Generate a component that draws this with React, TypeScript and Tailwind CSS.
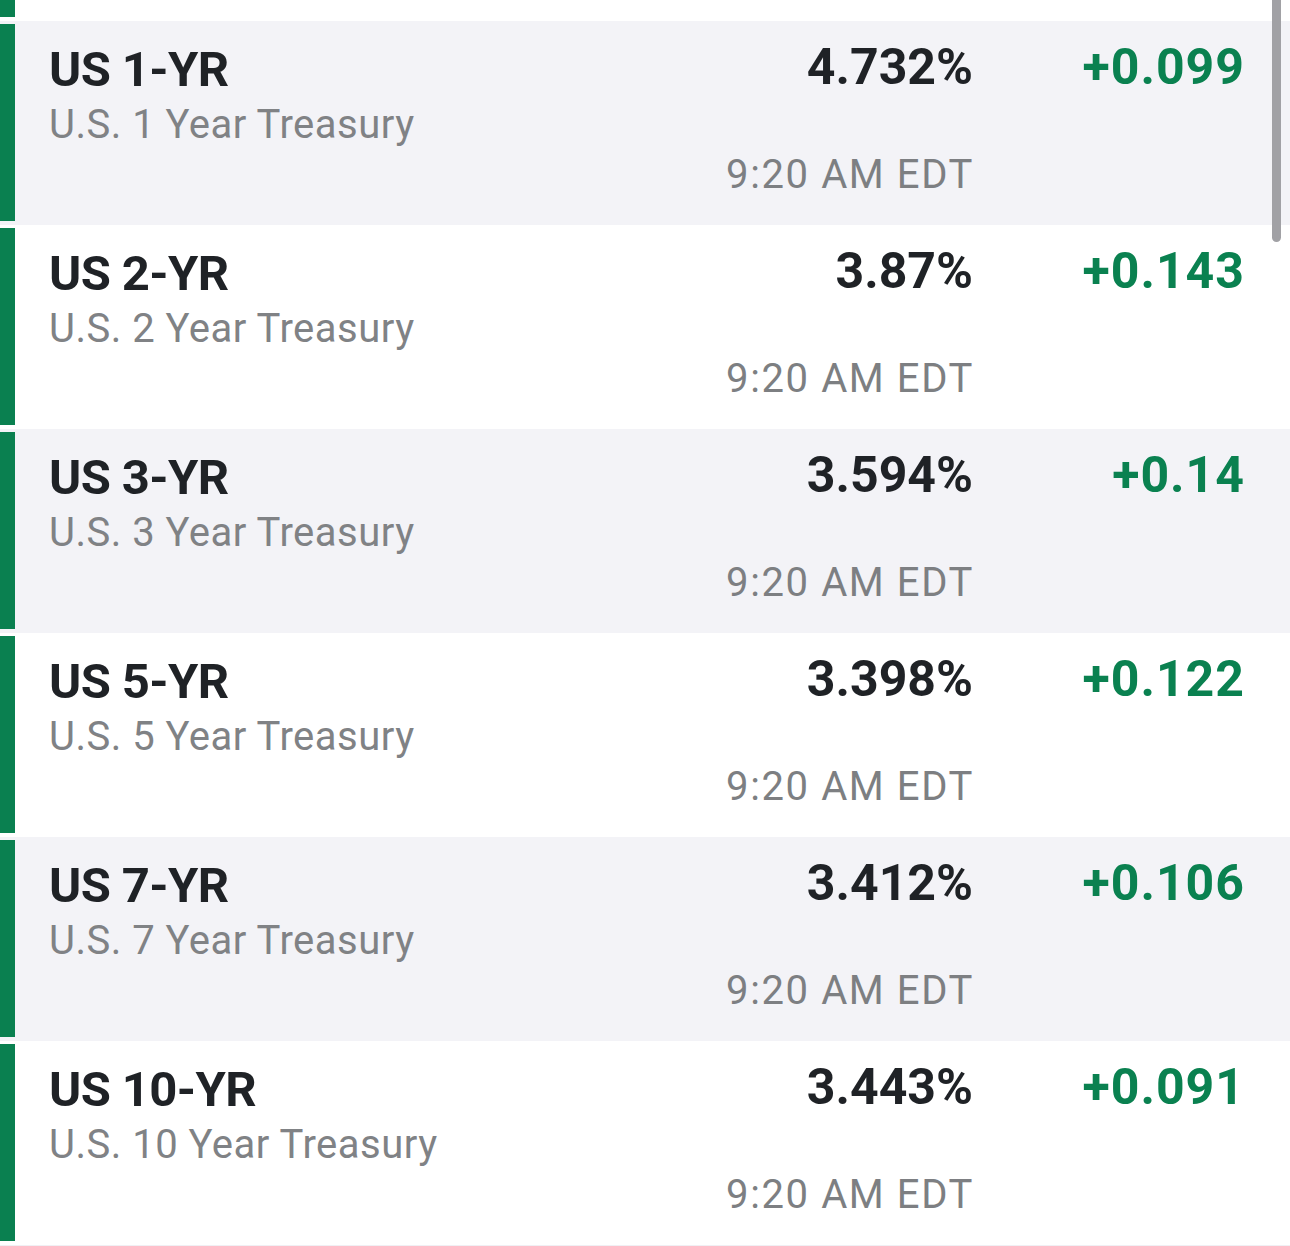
import React from "react";

type Row = { sym: string; name: string; price: string; change: string };

const rows: Row[] = [
  { sym: "US 1-YR", name: "U.S. 1 Year Treasury", price: "4.732%", change: "+0.099" },
  { sym: "US 2-YR", name: "U.S. 2 Year Treasury", price: "3.87%", change: "+0.143" },
  { sym: "US 3-YR", name: "U.S. 3 Year Treasury", price: "3.594%", change: "+0.14" },
  { sym: "US 5-YR", name: "U.S. 5 Year Treasury", price: "3.398%", change: "+0.122" },
  { sym: "US 7-YR", name: "U.S. 7 Year Treasury", price: "3.412%", change: "+0.106" },
  { sym: "US 10-YR", name: "U.S. 10 Year Treasury", price: "3.443%", change: "+0.091" },
];

function QuoteRow({ row, shaded }: { row: Row; shaded: boolean }) {
  return (
    <div className={`flex h-[204px] ${shaded ? "bg-[#f3f3f7]" : "bg-white"}`}>
      <div className="w-[15px] shrink-0 mt-[3px] mb-[4px] bg-[#0a8050]" />
      <div className="flex-1 pl-[34px] pt-[21px]">
        <div className="text-[49px] leading-[56px] font-bold text-[#1f2226] tracking-[-0.6px]">{row.sym}</div>
        <div className="mt-[3px] text-[40px] leading-[48px] text-[#808285] tracking-[0.5px]">{row.name}</div>
      </div>
      <div className="w-[400px] shrink-0 pt-[18px] flex flex-col items-end">
        <div className="text-[50px] leading-[56px] font-bold text-[#1f2226]">{row.price}</div>
        <div className="mt-[56px] text-[40px] leading-[48px] text-[#7d7f82] tracking-[1.6px] mr-[-1px]">9:20 AM EDT</div>
      </div>
      <div className="w-[317px] shrink-0 pt-[18px] pr-[45px] flex flex-col items-end">
        <div className="text-[50px] leading-[56px] font-bold text-[#0a8150] tracking-[1px]">{row.change}</div>
      </div>
    </div>
  );
}

export default function App() {
  return (
    <div className="relative w-[1290px] h-[1246px] overflow-hidden bg-white" style={{ fontFamily: "Roboto, 'Liberation Sans', sans-serif" }}>
      <div className="flex h-[21px] bg-white">
        <div className="w-[15px] h-[17px] bg-[#0a8050]" />
      </div>
      {rows.map((r, i) => (
        <QuoteRow key={r.sym} row={r} shaded={i % 2 === 0} />
      ))}
      <div className="h-[1px] bg-[#f0f0f4]" />
      <div className="absolute right-[9px] top-[-20px] w-[9px] h-[262px] rounded-full bg-[#a1a1a5]" />
    </div>
  );
}
